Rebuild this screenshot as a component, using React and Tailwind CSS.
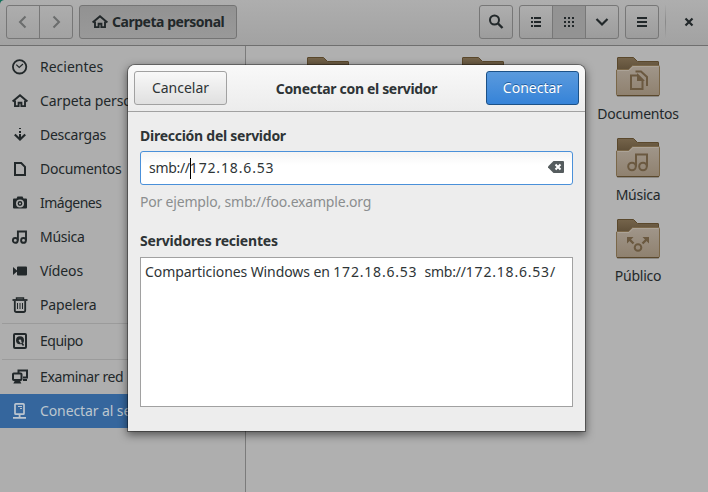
import React from "react";

const icons = {
  clock: (
    <g fill="none" stroke="currentColor">
      <circle cx="7.6" cy="7.8" r="6.7" strokeWidth="1.8" />
      <path d="M4.3 5.6 7.2 8.4 11 5" strokeWidth="1.2" />
    </g>
  ),
  home: (
    <g>
      <path d="M0.6 8.6 8 2.2 15.4 8.6" fill="none" stroke="currentColor" strokeWidth="2" />
      <path d="M3 7.5V13.1H6.6V9.8H9.4V13.1H13V7.5" fill="none" stroke="currentColor" strokeWidth="1.9" />
    </g>
  ),
  download: (
    <g>
      <path d="M7 1h2v1H7zM7 4h2v2H7zM7 7h2v5H7z" fill="currentColor" />
      <path d="M2.8 7.5 8 12.5 13.2 7.5" fill="none" stroke="currentColor" strokeWidth="2.2" />
    </g>
  ),
  doc: <path d="M3 2H9.2L13 5.8V14H3Z" fill="none" stroke="currentColor" strokeWidth="2" />,
  camera: (
    <path
      fillRule="evenodd"
      fill="currentColor"
      d="M5.5 1.5h5l1 2H14a1 1 0 0 1 1 1v8a1 1 0 0 1-1 1H2a1 1 0 0 1-1-1v-8a1 1 0 0 1 1-1h2.5zM8 4.5a4 4 0 1 0 0 8 4 4 0 0 0 0-8zM8 6.1a2.4 2.4 0 1 1 0 4.8 2.4 2.4 0 0 1 0-4.8zM8 7.5a1 1 0 1 0 0 2 1 1 0 0 0 0-2z"
    />
  ),
  music: (
    <g fill="none" stroke="currentColor" strokeWidth="1.9">
      <circle cx="3.3" cy="11.4" r="2.4" />
      <circle cx="11.5" cy="11.4" r="2.4" />
      <path d="M5.900 11.500V2.500H14V11.500" />
    </g>
  ),
  video: <path d="M6 3.500h8a1 1 0 0 1 1 1v7a1 1 0 0 1-1 1H6a1 1 0 0 1-1-1v-7a1 1 0 0 1 1-1zM1 4v8l4-3.500v-1z" fill="currentColor" />,
  trash: (
    <g fill="none" stroke="currentColor">
      <path d="M0.500 3H15.500" strokeWidth="1.8" />
      <path d="M4.500 2.700V1H11.500V2.700" strokeWidth="1.4" />
      <path d="M2.800 4V13.200Q2.800 15 4.500 15H11.500Q13.200 15 13.200 13.200V4" strokeWidth="1.8" />
      <path d="M5.500 6V12M8 6V12M10.500 6V12" strokeWidth="1" />
    </g>
  ),
  disk: (
    <g>
      <rect x="2" y="1" width="12" height="14" rx="1" fill="none" stroke="currentColor" strokeWidth="2" />
      <circle cx="8" cy="7.3" r="4" fill="currentColor" />
      <circle cx="8" cy="7.6" r="1.2" fill="#aeaeae" />
      <path d="M8 8 12 13.500" stroke="#aeaeae" strokeWidth="1.6" />
      <path d="M9.500 9.800 11.500 12.500" stroke="currentColor" strokeWidth="1.6" />
    </g>
  ),
  network: (
    <g>
      <path d="M6.500 4V1.500H15V8.500H11" fill="none" stroke="currentColor" strokeWidth="2" />
      <path d="M11 10h4v2h-4z" fill="currentColor" />
      <rect x="1" y="4.5" width="8.5" height="6.5" rx="0.8" fill="none" stroke="currentColor" strokeWidth="2" />
      <path d="M3 11.500h5l1.300 3H1.300z" fill="currentColor" />
    </g>
  ),
  server: (
    <g>
      <rect x="3" y="0.8" width="9" height="10.4" rx="0.8" fill="none" stroke="currentColor" strokeWidth="1.7" />
      <path d="M6 3.500h4M8 5.500h2" stroke="currentColor" strokeWidth="1.1" />
      <path d="M6.700 11h1.800v3H6.700zM1 14h13v1.800H1z" fill="currentColor" />
    </g>
  ),
};

const Icon = ({ name }) => (
  <svg viewBox="0 0 16 16" className="h-4 w-4 shrink-0 overflow-visible">
    {icons[name]}
  </svg>
);

const places = [
  ["clock", "Recientes", "tracking-normal"],
  ["home", "Carpeta personal", "tracking-[-0.1px]"],
  ["download", "Descargas", "tracking-[-0.25px]"],
  ["doc", "Documentos", "tracking-[-0.25px]"],
  ["camera", "Imágenes", "tracking-[-0.5px]"],
  ["music", "Música", "tracking-[-0.3px]"],
  ["video", "Vídeos", "tracking-[-0.1px]"],
  ["trash", "Papelera", "tracking-[-0.15px]"],
];

const Row = ({ icon, label, tracking, active }) => (
  <div
    className={
      active
        ? "flex h-[34px] items-center gap-3 bg-[#35669d] pl-3 text-[#bdc6cf]"
        : "flex h-[34px] items-center gap-3 pl-3"
    }
  >
    <Icon name={icon} />
    <span className={`whitespace-nowrap pb-px ${tracking}`}>{label}</span>
  </div>
);

const Divider = () => (
  <div className="flex h-0.5 items-end pl-0.5">
    <div className="h-px w-full bg-[#9b9b9b]" />
  </div>
);

const emblems = {
  docs: (
    <g>
      <path d="M15 18.500H22L26.500 23V32H15Z" />
      <path d="M22 18.500V23H26.500Z" fill="#6b5940" />
      <path d="M19.500 14.500H25L31 20V29" />
    </g>
  ),
  music: (
    <g>
      <circle cx="16" cy="28.5" r="3.8" />
      <circle cx="27" cy="28.5" r="3.8" />
      <path d="M20 28.500V16.500H31V28.500" />
    </g>
  ),
  share: (
    <g>
      <circle cx="22" cy="28.5" r="3.3" />
      <path d="M17.500 24.500 12.500 19.500M26.500 24.500 31.500 19.500" strokeWidth="2.4" />
      <path d="M11 18h6.500L11 24.500zM33 18h-6.500l6.500 6.500z" fill="#6b5940" stroke="none" />
    </g>
  ),
};

const Folder = ({ emblem, label }) => (
  <div className="flex h-[81px] w-[155px] flex-col items-center">
    <svg viewBox="0 0 44 42" className="h-[42px] w-11 shrink-0">
      <defs>
        <linearGradient id="front" x1="0" y1="0" x2="0" y2="1">
          <stop offset="0" stopColor="#a0968a" />
          <stop offset="1" stopColor="#8f816f" />
        </linearGradient>
        <linearGradient id="back" x1="0" y1="0" x2="0" y2="1">
          <stop offset="0" stopColor="#75644b" />
          <stop offset="0.5" stopColor="#54452f" />
        </linearGradient>
      </defs>
      <rect x="1" y="37.5" width="42" height="2.5" rx="1" fill="#8b8883" />
      <path d="M1.500 37V1Q1.500 0.500 2 0.500H17.500L21.500 4.500H42Q42.500 4.500 42.500 5V37Z" fill="url(#back)" stroke="#5a482c" />
      <path d="M1 12.500H12.500L16.500 8.500H42.500Q43.500 8.500 43.500 9.500V37Q43.500 38.500 42.500 38.500H1.500Q0.500 38.500 0.500 37.500V13Z" fill="url(#front)" stroke="#7a6749" />
      <path d="M1.500 13.500H13L17 9.500H42.500" fill="none" stroke="#aca397" />
      <path d="M1 38.500H43" stroke="#5a482c" />
      <g fill="none" stroke="#6b5940" strokeWidth="2">{emblems[emblem]}</g>
    </svg>
    <span className="leading-[30px] tracking-[-0.25px]">{label}</span>
  </div>
);

const box = "flex items-center justify-center rounded-[3px] border border-[#777] bg-linear-to-b from-[#aeaeae] to-[#9c9c9c]";

export default function App() {
  return (
    <div className="relative h-[492px] w-[708px] overflow-hidden bg-[#b0b0b0] font-['Noto_Sans',sans-serif] text-[14px] text-[#22282a]">
      <svg viewBox="0 0 4 4" className="absolute left-0 top-0 h-1 w-1">
        <path d="M0 0H4Q0.500 0.500 0 4Z" fill="#13705a" />
      </svg>
      <header className="flex h-[46px] items-start border-b border-[#6f6f6f] bg-linear-to-b from-[#aeaeae] to-[#a2a2a2] pl-1.5 pt-[5px]">
        <div className="flex h-[34px] w-[67px] divide-x divide-[#777] rounded-[3px] border border-[#777] bg-linear-to-b from-[#adadad] to-[#a2a2a2] text-[#6b6d6d]">
          {["M10.500 2.500 5 8 10.500 13.500", "M5.500 2.500 11 8 5.500 13.500"].map((d) => (
            <div key={d} className="flex flex-1 items-center justify-center">
              <svg viewBox="0 0 16 16" className="h-4 w-4">
                <path d={d} fill="none" stroke="currentColor" strokeWidth="2" />
              </svg>
            </div>
          ))}
        </div>
        <div className="ml-1.5 flex h-[34px] w-[158px] items-center gap-1 rounded-[3px] border border-[#747474] bg-linear-to-b from-[#929292] to-[#999] pl-3 font-bold">
          <Icon name="home" />
          <span className="whitespace-nowrap pb-px tracking-[-0.47px]">Carpeta personal</span>
        </div>
        <div className={`${box} ml-[242px] h-[34px] w-[34px]`}>
          <svg viewBox="0 0 16 16" className="h-4 w-4">
            <circle cx="6.5" cy="6" r="4.5" fill="none" stroke="currentColor" strokeWidth="2" />
            <path d="M10 9.500 14.500 14" stroke="currentColor" strokeWidth="2.4" />
          </svg>
        </div>
        <div className={`${box} ml-1.5 h-[34px] w-[100px] divide-x divide-[#777]`}>
          <div className="flex h-full w-[33px] items-center justify-center">
            <svg viewBox="0 0 16 16" className="h-4 w-4">
              <path d="M3 4h2M3 8h2M3 12h2M6 4h7M6 8h7M6 12h7" stroke="currentColor" strokeWidth="2" />
            </svg>
          </div>
          <div className="flex h-full w-[33px] items-center justify-center bg-[#939393]">
            <svg viewBox="0 0 16 16" className="h-4 w-4">
              <path d="M3 4h10M3 8h10M3 12h10" stroke="currentColor" strokeWidth="2" strokeDasharray="2 2" />
            </svg>
          </div>
          <div className="flex h-full flex-1 items-center justify-center">
            <svg viewBox="0 0 16 16" className="h-4 w-4">
              <path d="M2.500 5 8 10.500 13.500 5" fill="none" stroke="currentColor" strokeWidth="2.2" />
            </svg>
          </div>
        </div>
        <div className={`${box} ml-1.5 h-[34px] w-[34px]`}>
          <svg viewBox="0 0 16 16" className="h-4 w-4">
            <path d="M3 4h10M3 8h10M3 12h10" stroke="currentColor" strokeWidth="2" />
          </svg>
        </div>
        <div className="ml-1.5 h-[34px] w-px bg-linear-to-b from-[#aaa] via-[#888] to-[#a5a5a5]" />
        <div className="flex h-[34px] flex-1 items-center justify-center pl-1">
          <svg viewBox="0 0 16 16" className="h-4 w-4">
            <path d="M4.500 4.500 11.500 11.500M11.500 4.500 4.500 11.500" stroke="currentColor" strokeWidth="2.2" />
          </svg>
        </div>
      </header>
      <div className="flex h-[446px]">
        <aside className="w-[246px] shrink-0 border-r border-[#7b7b7b] bg-[#aeaeae] pt-1">
          {places.map(([icon, label, tracking]) => (
            <Row key={label} icon={icon} label={label} tracking={tracking} />
          ))}
          <Divider />
          <Row icon="disk" label="Equipo" tracking="tracking-[-0.5px]" />
          <Divider />
          <Row icon="network" label="Examinar red" tracking="tracking-[-0.36px]" />
          <Row icon="server" label="Conectar al servidor" tracking="tracking-[-0.1px]" active />
        </aside>
        <main className="grid flex-1 auto-rows-[81px] grid-cols-[155px_155px_155px] content-start pl-[4.5px] pt-[11px]">
          <Folder />
          <Folder />
          <Folder emblem="docs" label="Documentos" />
          <Folder />
          <Folder />
          <Folder emblem="music" label="Música" />
          <Folder />
          <Folder />
          <Folder emblem="share" label="Público" />
        </main>
      </div>

      <section className="absolute left-[128px] top-[65px] h-[366px] w-[457px] rounded-t-[7px] bg-[#ededed] text-[#2e3436] shadow-[0_0_0_1px_rgba(0,0,0,0.35),0_3px_9px_1px_rgba(0,0,0,0.5)]">
        <header className="flex h-[47px] items-center justify-between rounded-t-[7px] border-b border-[#a1a1a1] bg-linear-to-b from-[#f9f9f9] to-[#ececec] px-1.5">
          <button className="h-[34px] w-[93px] rounded-[3px] border border-[#a1a1a1] bg-linear-to-b from-[#f8f8f8] to-[#e0e0e0] pb-px">Cancelar</button>
          <span className="whitespace-nowrap font-bold tracking-[-0.33px]">Conectar con el servidor</span>
          <button className="h-[34px] w-[93px] rounded-[3px] border border-[#1c5187] bg-linear-to-b from-[#5a9add] to-[#3583d8] pb-px text-white [text-shadow:0_-1px_#1f5c9d]">Conectar</button>
        </header>
        <div className="px-3 pt-3">
          <div className="h-[27px] font-bold leading-[23px] tracking-[-0.26px]">Dirección del servidor</div>
          <div className="flex h-[34px] w-[433px] items-center rounded-[3px] border border-[#4a90d9] bg-linear-to-b from-[#f4f4f4] to-white to-40% px-2">
            <span className="pb-px tracking-[-0.3px]">smb://</span>
            <span className="-mr-px h-[21px] w-px bg-black" />
            <span className="pb-px tracking-[0.85px]">172.18.6.53</span>
            <svg viewBox="0 0 16 12" className="mb-0.5 ml-auto h-3 w-4">
              <path d="M5.500 0H15a1 1 0 0 1 1 1V11a1 1 0 0 1-1 1H5.500L0 6.500V5.500Z" fill="#555c5e" />
              <path d="M7.500 3.500 12.500 8.500M12.500 3.500 7.500 8.500" stroke="#fff" strokeWidth="2" />
            </svg>
          </div>
          <div className="mt-1.5 h-[23px] leading-[22px] tracking-[-0.19px] text-[#8b8e8f]">Por ejemplo, smb://foo.example.org</div>
          <div className="mt-4 h-[27px] font-bold leading-[22px] tracking-[-0.2px]">Servidores recientes</div>
          <div className="flex h-[150px] w-[433px] items-start border border-[#a1a1a1] bg-white px-1 pt-[3px] leading-[21px]">
            <span className="whitespace-pre tracking-[-0.09px]">Comparticiones Windows en </span>
            <span className="tracking-[0.8px]">172.18.6.53</span>
            <span className="ml-[7px] tracking-[-0.2px]">smb://</span>
            <span className="tracking-[0.8px]">172.18.6.53/</span>
          </div>
        </div>
      </section>
    </div>
  );
}
